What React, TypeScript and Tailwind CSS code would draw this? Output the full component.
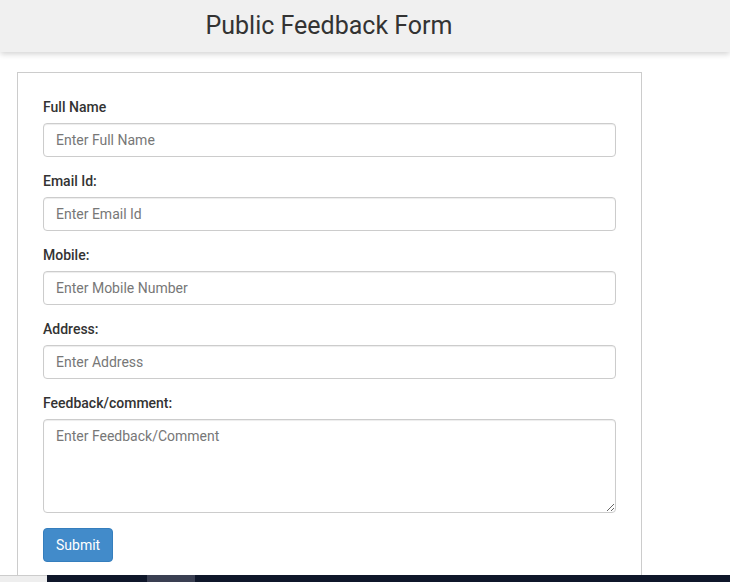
const fields = [
  { label: "Full Name", placeholder: "Enter Full Name" },
  { label: "Email Id:", placeholder: "Enter Email Id" },
  { label: "Mobile:", placeholder: "Enter Mobile Number" },
  { label: "Address:", placeholder: "Enter Address" },
];

export default function App() {
  return (
    <div className="min-h-screen bg-white font-['Roboto',sans-serif] text-[#333]">
      <header className="h-[52px] bg-[#f0f0f0] shadow-[0_2px_6px_rgba(0,0,0,0.18)]">
        <div className="w-[658px] h-full flex items-center justify-center pb-[2px]">
          <h1 className="text-[25px] text-[#333] leading-none">Public Feedback Form</h1>
        </div>
      </header>

      <div className="pl-[17px] pt-[20px]">
        <form
          className="w-[625px] border border-[#ccc] px-[25px] pt-[24px] pb-[30px]"
          onSubmit={(e) => e.preventDefault()}
        >
          {fields.map((f) => (
            <div key={f.label} className="mb-[14px]">
              <label className="block text-[14px] font-medium leading-[20px] mb-[6px]">
                {f.label}
              </label>
              <input
                type="text"
                placeholder={f.placeholder}
                className="block w-full h-[34px] px-[12px] text-[14px] border border-[#ccc] rounded-[4px] shadow-[inset_0_1px_1px_rgba(0,0,0,0.075)] placeholder:text-[#777] focus:outline-none"
              />
            </div>
          ))}

          <div className="mb-[15px]">
            <label className="block text-[14px] font-medium leading-[20px] mb-[6px]">
              Feedback/comment:
            </label>
            <textarea
              placeholder="Enter Feedback/Comment"
              className="block w-full h-[94px] px-[12px] py-[6px] text-[14px] border border-[#ccc] rounded-[4px] shadow-[inset_0_1px_1px_rgba(0,0,0,0.075)] placeholder:text-[#777] focus:outline-none"
            />
          </div>

          <button
            type="submit"
            className="h-[34px] px-[12px] bg-[#428bca] border border-[#357ebd] text-white text-[14px] rounded-[4px]"
          >
            Submit
          </button>
        </form>
      </div>

      <div className="fixed bottom-0 left-0 right-0 h-[7px] flex">
        <div className="w-[47px] bg-[#eeeeee] border-t border-[#ccc]" />
        <div className="w-[100px] bg-[#0f172a]" />
        <div className="w-[48px] bg-[#3a3f52]" />
        <div className="flex-1 bg-[#0f172a]" />
      </div>
    </div>
  );
}
